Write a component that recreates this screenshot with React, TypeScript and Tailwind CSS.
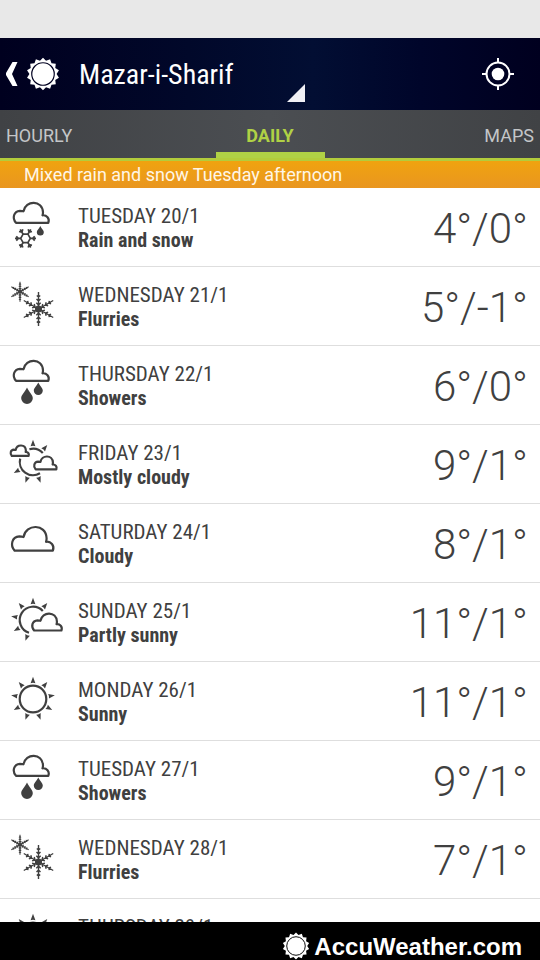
import React from "react";

type IconName = "rainSnow" | "flurries" | "showers" | "mostlyCloudy" | "cloudy" | "partlySunny" | "sunny";

interface Day {
  date: string;
  summary?: string;
  temps?: string;
  icon: IconName;
}

const days: Day[] = [
  { date: "TUESDAY 20/1", summary: "Rain and snow", temps: "4°/0°", icon: "rainSnow" },
  { date: "WEDNESDAY 21/1", summary: "Flurries", temps: "5°/-1°", icon: "flurries" },
  { date: "THURSDAY 22/1", summary: "Showers", temps: "6°/0°", icon: "showers" },
  { date: "FRIDAY 23/1", summary: "Mostly cloudy", temps: "9°/1°", icon: "mostlyCloudy" },
  { date: "SATURDAY 24/1", summary: "Cloudy", temps: "8°/1°", icon: "cloudy" },
  { date: "SUNDAY 25/1", summary: "Partly sunny", temps: "11°/1°", icon: "partlySunny" },
  { date: "MONDAY 26/1", summary: "Sunny", temps: "11°/1°", icon: "sunny" },
  { date: "TUESDAY 27/1", summary: "Showers", temps: "9°/1°", icon: "showers" },
  { date: "WEDNESDAY 28/1", summary: "Flurries", temps: "7°/1°", icon: "flurries" },
  { date: "THURSDAY 29/1", icon: "sunny" },
];

function Cloud({ x, y, w }: { x: number; y: number; w: number }) {
  return (
    <path
      transform={`translate(${x} ${y}) scale(${w / 35.5})`}
      vectorEffect="non-scaling-stroke"
      d="M2.5 20C-1.5 15.5 0 8.5 6.5 8C8 8 9 8.2 10 8.5C12 -3 29 -3 29.5 9.5C29.5 11 29.2 12 29 12.5C33 12 36.5 15.5 34.8 20Z"
    />
  );
}

function Drop({ x, y, w, h }: { x: number; y: number; w: number; h: number }) {
  const r = w / 2;
  return (
    <path
      stroke="none"
      fill="currentColor"
      d={`M${x} ${y}C${x + r * 0.4} ${y + h * 0.3} ${x + r} ${y + h * 0.45} ${x + r} ${y + h - r}A${r} ${r} 0 0 1 ${x - r} ${y + h - r}C${x - r} ${y + h * 0.45} ${x - r * 0.4} ${y + h * 0.3} ${x} ${y}Z`}
    />
  );
}

function Rays({ angles }: { angles: number[] }) {
  return (
    <g fill="currentColor" stroke="none">
      {angles.map((a) => (
        <path key={a} transform={`rotate(${a} 33 37)`} d="M33 14.8L35.4 21.2Q33 20.2 30.6 21.2Z" />
      ))}
    </g>
  );
}

function Flake({ x, y, r }: { x: number; y: number; r: number }) {
  return (
    <g transform={`translate(${x} ${y}) scale(${r / 17})`} strokeWidth={r > 12 ? 1.4 : 1.8}>
      {[0, 60, 120, 180, 240, 300].map((a) => (
        <path
          key={a}
          transform={`rotate(${a})`}
          d="M0 0V-17M-1.7 -13.5L0 -12L1.7 -13.5M-2 -10L0 -8L2 -10M-2.2 -6.2L0 -4L2.2 -6.2"
        />
      ))}
      <circle r="3.6" fill="currentColor" stroke="none" />
    </g>
  );
}

function RingFlake() {
  return (
    <g transform="translate(25.5 50.4)" strokeWidth="1.7">
      <path d="M-2.4 -4.2H2.4L4.8 0L2.4 4.2H-2.4L-4.8 0Z" />
      {[30, 90, 150, 210, 270, 330].map((a) => (
        <path key={a} transform={`rotate(${a})`} d="M0 -4.5V-10.5M-2.2 -9.2L0 -7.2L2.2 -9.2" />
      ))}
    </g>
  );
}

const art: Record<IconName, React.ReactNode> = {
  rainSnow: (
    <>
      <Cloud x={13.5} y={14.8} w={35.5} />
      <RingFlake />
      <Drop x={40.3} y={38} w={7} h={9.5} />
    </>
  ),
  flurries: (
    <>
      <Flake x={20} y={24.7} r={10} />
      <Flake x={38.5} y={42} r={17} />
    </>
  ),
  showers: (
    <>
      <Cloud x={13.5} y={14.8} w={35.5} />
      <Drop x={27} y={41.5} w={11.6} h={16.5} />
      <Drop x={38.3} y={36.5} w={9} h={12.5} />
    </>
  ),
  mostlyCloudy: (
    <>
      <Cloud x={10.5} y={20.5} w={18.5} />
      <Cloud x={34} y={31.5} w={22.8} />
      <path d="M29.4 24.2A13.3 13.3 0 0 1 42.8 28M20.2 33.6A13.3 13.3 0 0 0 40 48.3" />
      <Rays angles={[0, 40, 160, 200, 240]} />
    </>
  ),
  cloudy: <Cloud x={11.7} y={23} w={42} />,
  partlySunny: (
    <>
      <path d="M42.8 28A13.3 13.3 0 1 0 29 49.7" />
      <Cloud x={32} y={30.6} w={30} />
      <Rays angles={[0, 40, 200, 240, 280, 320]} />
    </>
  ),
  sunny: (
    <>
      <circle cx="33" cy="37" r="13.3" />
      <Rays angles={[0, 40, 80, 120, 160, 200, 240, 280, 320]} />
    </>
  ),
};

function WeatherIcon({ name }: { name: IconName }) {
  return (
    <svg
      viewBox="0 0 66 78"
      className="h-[78px] w-[66px] shrink-0"
      fill="none"
      stroke="currentColor"
      strokeWidth="2.2"
      strokeLinejoin="round"
      aria-hidden="true"
    >
      {art[name]}
    </svg>
  );
}

const TEETH = 14;

const burst = Array.from({ length: TEETH * 2 }, (_, i) => {
  const r = i % 2 === 0 ? 15.4 : 12.8;
  const a = (i * Math.PI) / TEETH;
  return `${(16 + r * Math.sin(a)).toFixed(2)},${(16 - r * Math.cos(a)).toFixed(2)}`;
}).join(" ");

function SunLogo({ className, ring }: { className: string; ring: string }) {
  return (
    <svg viewBox="0 0 32 32" className={className} aria-hidden="true">
      <polygon points={burst} fill="white" />
      <circle cx="16" cy="16" r="10.6" fill="none" stroke={ring} strokeWidth="1.1" />
    </svg>
  );
}

export default function App() {
  return (
    <div className="flex h-screen flex-col overflow-hidden bg-white font-['Roboto',sans-serif] text-[#404040]">
      <div className="h-[38px] shrink-0 bg-[#e8e8e8]" />

      <header className="flex h-[72px] shrink-0 items-center bg-[linear-gradient(90deg,#00001f_0%,#01082a_35%,#020e33_58%,#00052a_78%,#00001f_100%)] pr-6 text-white">
        <button type="button" aria-label="Back" className="flex items-center gap-2 pl-1.5">
          <svg viewBox="0 0 12 24" className="h-6 w-3" fill="white" aria-hidden="true">
            <path d="M6.5 0H11.5L6 12L11.5 24H6.5L0 13V11Z" />
          </svg>
          <SunLogo className="h-[34px] w-[34px]" ring="#000020" />
        </button>
        <button type="button" className="ml-[19px] flex h-full w-[226px] items-center justify-between text-left">
          <span className="pt-0.5 font-['Roboto_Condensed','Roboto',sans-serif] text-[28px] leading-8">Mazar-i-Sharif</span>
          <svg viewBox="0 0 18 18" className="mb-2 h-[18px] w-[18px] self-end" fill="#f0f0f5" aria-hidden="true">
            <path d="M18 0V18H0Z" />
          </svg>
        </button>
        <button type="button" aria-label="My location" className="ml-auto">
          <svg viewBox="0 0 36 36" className="h-9 w-9" fill="none" stroke="white" strokeWidth="2" aria-hidden="true">
            <circle cx="18" cy="18" r="11.5" />
            <circle cx="18" cy="18" r="6.3" fill="white" stroke="none" />
            <path d="M18 2V7M18 29V34M2 18H7M29 18H34" />
          </svg>
        </button>
      </header>

      <nav className="grid h-[51px] shrink-0 grid-cols-3 border-b-[3px] border-[#b3cc3c] bg-[linear-gradient(90deg,#404245,#4b4e52_50%,#404245)] text-lg text-[#c4c6c8]">
        <button type="button" className="pt-1 pl-1.5 text-left">HOURLY</button>
        <button type="button" className="mx-auto flex w-[109px] items-center justify-center border-b-[6px] border-[#b0d145] pt-2.5 font-bold text-[#b0d145]" aria-current="page">
          DAILY
        </button>
        <button type="button" className="pt-1 pr-1.5 text-right">MAPS</button>
      </nav>

      <p className="h-[27px] shrink-0 bg-[linear-gradient(180deg,#f0a30f,#e99620)] pl-6 text-lg leading-[27px] text-[#fff6e6]">
        Mixed rain and snow Tuesday afternoon
      </p>

      <main className="min-h-0 flex-1 overflow-hidden">
        <ul>
          {days.map((day) => (
            <li key={day.date} className="flex items-center border-b border-[#dedede] pr-3">
              <WeatherIcon name={day.icon} />
              <div className="ml-3 flex-1 pt-0.5 font-['Roboto_Condensed','Roboto',sans-serif]">
                <p className="text-[21px] leading-6">{day.date}</p>
                <p className="h-6 text-xl leading-6 font-bold">{day.summary}</p>
              </div>
              {day.temps && <p className="pt-1 text-[42px] leading-[48px] font-light">{day.temps}</p>}
            </li>
          ))}
        </ul>
      </main>

      <footer className="flex h-[38px] shrink-0 items-end justify-end gap-1 bg-black pr-[18px] text-white">
        <SunLogo className="h-7 w-7" ring="black" />
        <span className="font-['Liberation_Sans',Arial,sans-serif] text-2xl leading-[26px] font-bold">AccuWeather.com</span>
      </footer>
    </div>
  );
}
